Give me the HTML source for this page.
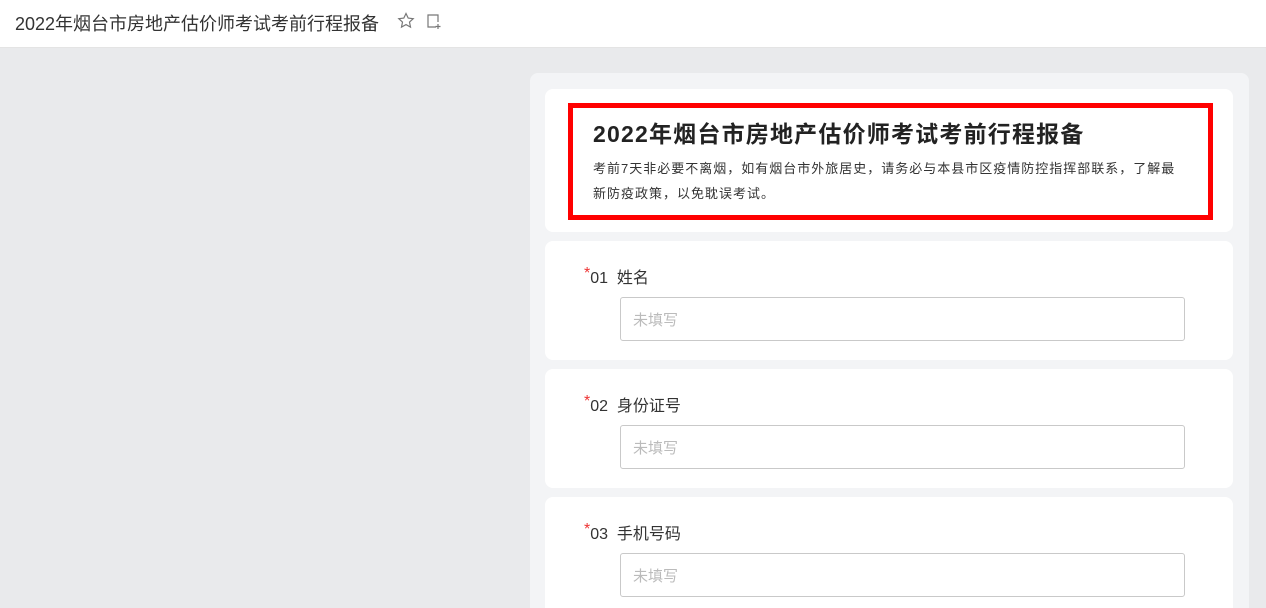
<!DOCTYPE html>
<html><head><meta charset="utf-8"><style>
*{margin:0;padding:0;box-sizing:border-box}
html,body{width:1266px;height:608px;overflow:hidden}
body{background:#e9eaec;font-family:"Liberation Sans","Noto Sans CJK SC",sans-serif;position:relative}
.top{position:absolute;left:0;top:0;width:1266px;height:48px;background:#fff;border-bottom:1px solid #e4e4e4}
.top .t{position:absolute;left:15px;top:10px;font-size:18px;color:#333}
.panel{position:absolute;left:530px;top:73px;width:719px;height:560px;background:#f3f4f6;border-radius:8px}
.card{position:absolute;left:545px;width:688px;background:#fff;border-radius:8px}
.red{position:absolute;left:568px;top:103px;width:645px;height:117px;border:5px solid #f00}
.h1{position:absolute;left:593px;top:115px;font-size:23px;font-weight:bold;color:#222;letter-spacing:1.2px}
.desc{position:absolute;left:593px;top:156px;width:600px;font-size:13px;line-height:25px;color:#333;letter-spacing:1px;white-space:nowrap}
.lab{position:absolute;left:584px;font-size:16px;color:#333}
.lab b{color:#e33;font-weight:normal;position:relative;top:-5px}
.inp{position:absolute;left:620px;width:565px;height:44px;border:1px solid #c9c9c9;border-radius:3px;font-size:15px;color:#bbb;padding:11px 0 0 12px}
</style></head><body>
<div class="top"><div class="t">2022年烟台市房地产估价师考试考前行程报备</div>
<svg style="position:absolute;left:397px;top:12px" width="18" height="18" viewBox="0 0 18 18"><path d="M9 1.5l2.2 4.6 5 .6-3.7 3.4 1 5-4.5-2.5-4.5 2.5 1-5L1.8 6.7l5-.6z" fill="none" stroke="#777" stroke-width="1.2"/></svg>
<svg style="position:absolute;left:426px;top:13px" width="16" height="17" viewBox="0 0 16 17"><path d="M10 14H2V2h10v7M12 11v5M9.5 13.5h5" fill="none" stroke="#777" stroke-width="1.2"/></svg>
</div>
<div class="panel"></div>
<div class="card" style="top:89px;height:143px"></div>
<div class="red"></div>
<div class="h1">2022年烟台市房地产估价师考试考前行程报备</div>
<div class="desc">考前7天非必要不离烟，如有烟台市外旅居史，请务必与本县市区疫情防控指挥部联系，了解最<br>新防疫政策，以免耽误考试。</div>
<div class="card" style="top:241px;height:119px"></div>
<div class="lab" style="top:264px"><b>*</b>01&nbsp; 姓名</div>
<div class="inp" style="top:297px">未填写</div>
<div class="card" style="top:369px;height:119px"></div>
<div class="lab" style="top:392px"><b>*</b>02&nbsp; 身份证号</div>
<div class="inp" style="top:425px">未填写</div>
<div class="card" style="top:497px;height:140px"></div>
<div class="lab" style="top:520px"><b>*</b>03&nbsp; 手机号码</div>
<div class="inp" style="top:553px">未填写</div>
</body></html>
